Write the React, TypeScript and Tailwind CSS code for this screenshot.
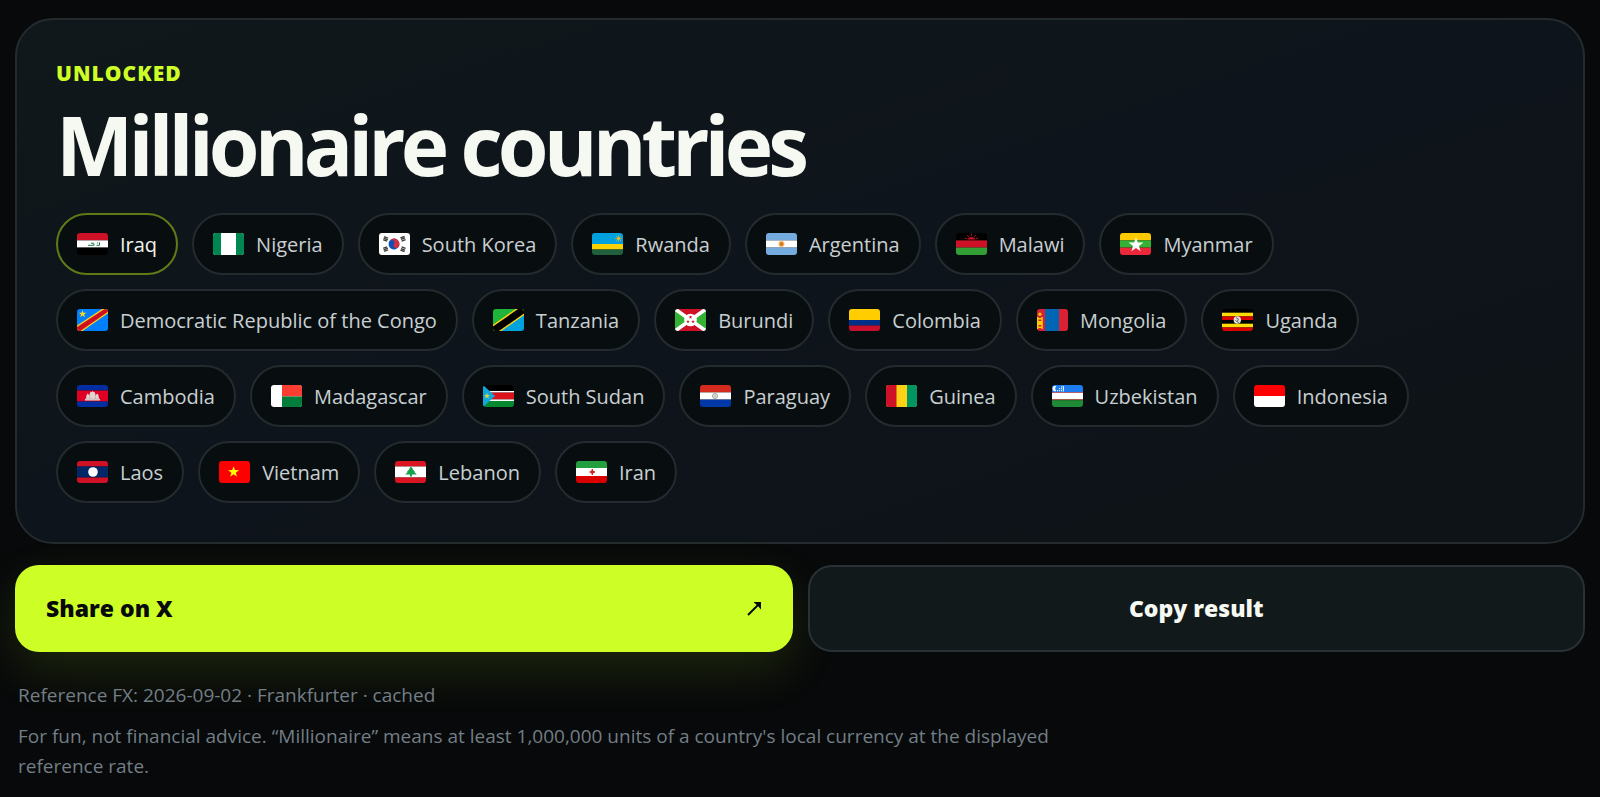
import React, { memo } from 'react';

// Five pointed star, first tip pointing up
const starPoints = (cx: number, cy: number, r: number) =>
  Array.from({ length: 10 }, (_, i) => {
    const radius = i % 2 === 0 ? r : r * 0.4;
    const angle = (Math.PI / 5) * i - Math.PI / 2;
    return `${(cx + radius * Math.cos(angle)).toFixed(2)},${(cy + radius * Math.sin(angle)).toFixed(2)}`;
  }).join(' ');

const Star: React.FC<{ cx: number; cy: number; r: number; fill: string }> = ({ cx, cy, r, fill }) => (
  <polygon points={starPoints(cx, cy, r)} fill={fill} />
);

// Horizontal bands: [colour, height][]
const Bands: React.FC<{ rows: [string, number][] }> = ({ rows }) => {
  let y = 0;
  return (
    <>
      {rows.map(([fill, height], i) => {
        const top = y;
        y += height;
        return <rect key={i} x="0" y={top} width="31" height={height} fill={fill} />;
      })}
    </>
  );
};

interface Country {
  name: string;
  flag: React.ReactNode;
  active?: boolean;
}

const COUNTRIES: Country[] = [
  {
    name: 'Iraq',
    active: true,
    flag: (
      <>
        <Bands rows={[['#ce1126', 7.4], ['#ffffff', 7.2], ['#000000', 7.4]]} />
        <path d="M11 12.3h6v-1.6M14 10.2h3M19.5 12.3h3v-3M20 10h1" stroke="#1c7a45" strokeWidth="1" fill="none" />
      </>
    ),
  },
  {
    name: 'Nigeria',
    flag: (
      <>
        <rect width="31" height="22" fill="#fff" />
        <rect width="8" height="22" fill="#008751" />
        <rect x="23" width="8" height="22" fill="#008751" />
      </>
    ),
  },
  {
    name: 'South Korea',
    flag: (
      <>
        <rect width="31" height="22" fill="#fff" />
        <g transform="rotate(30 15 11)">
          <circle cx="15" cy="11" r="5.4" fill="#0f4fb8" />
          <path d="M9.6 11a5.4 5.4 0 0 1 10.8 0a2.7 2.7 0 0 1-5.4 0a2.7 2.7 0 0 0-5.4 0z" fill="#d22f3f" />
        </g>
        <g stroke="#3a3a3a" strokeWidth="1.3">
          <path d="M4.2 6.6l2.6-3.6M5.6 7.5l2.6-3.6M7 8.4l2.4-3.5" transform="rotate(76 6.6 5.7)" />
          <path d="M21.4 4.9l2.4 3.5M22.8 3.9l2.6 3.6M24.2 3l2.4 3.6" transform="rotate(-76 24 5.7)" />
          <path d="M4.2 15.4l2.6 3.6M5.6 14.5l2.6 3.6M7 13.6l2.4 3.5" transform="rotate(-76 6.6 16.3)" />
          <path d="M21.4 17.1l2.4-3.5M22.8 18.1l2.6-3.6M24.2 19l2.4-3.6" transform="rotate(76 24 16.3)" />
        </g>
      </>
    ),
  },
  {
    name: 'Rwanda',
    flag: (
      <>
        <Bands rows={[['#00a1de', 11], ['#fad201', 5.5], ['#20603d', 5.5]]} />
        <path d="M26.5 2v7M23 5.5h7M24 3l5 5M29 3l-5 5" stroke="#c9b43c" strokeWidth="0.7" />
        <circle cx="26.5" cy="5.5" r="1.6" fill="#d8bd30" />
      </>
    ),
  },
  {
    name: 'Argentina',
    flag: (
      <>
        <Bands rows={[['#74acdf', 7.4], ['#ffffff', 7.2], ['#74acdf', 7.4]]} />
        <circle cx="15.5" cy="11" r="3" fill="#f2bf73" />
        <circle cx="15.5" cy="11" r="2" fill="#d8791f" />
      </>
    ),
  },
  {
    name: 'Malawi',
    flag: (
      <>
        <Bands rows={[['#000000', 7.4], ['#ce1126', 7.2], ['#339e35', 7.4]]} />
        <path d="M11.6 6.4a4 3 0 0 1 7.8 0z" fill="#ce1126" />
        <path d="M15.5 0.8v2M11.2 2.2l1.6 1.6M19.8 2.2l-1.6 1.6M8.8 5l2.4.8M22.2 5l-2.4.8" stroke="#ce1126" strokeWidth="0.9" />
      </>
    ),
  },
  {
    name: 'Myanmar',
    flag: (
      <>
        <Bands rows={[['#fecb00', 7.4], ['#34b233', 7.2], ['#ea2839', 7.4]]} />
        <Star cx={16} cy={12} r={7.8} fill="#fff" />
      </>
    ),
  },
  {
    name: 'Democratic Republic of the Congo',
    flag: (
      <>
        <rect width="31" height="22" fill="#007fff" />
        <path d="M0 16.6L25 0h6v4.2L5.5 22H0z" fill="#f7d618" />
        <path d="M0 18L27.6 0H31v2.8L3.4 22H0z" fill="#ce1021" />
        <Star cx={5.6} cy={5} r={4} fill="#f7d618" />
      </>
    ),
  },
  {
    name: 'Tanzania',
    flag: (
      <>
        <path d="M0 0h31L0 22z" fill="#1eb53a" />
        <path d="M31 0v22H0z" fill="#00a3dd" />
        <path d="M-3 24L34 -2" stroke="#fcd116" strokeWidth="10" />
        <path d="M-3 24L34 -2" stroke="#000" strokeWidth="7" />
      </>
    ),
  },
  {
    name: 'Burundi',
    flag: (
      <>
        <rect width="31" height="22" fill="#ce1126" />
        <path d="M0 0l15.5 11L0 22zM31 0L15.5 11 31 22z" fill="#34b233" />
        <path d="M0 0l31 22M31 0L0 22" stroke="#fff" strokeWidth="3.6" />
        <circle cx="15.5" cy="11" r="6.3" fill="#fff" />
        <Star cx={15.5} cy={8.2} r={1.9} fill="#ce1126" />
        <Star cx={13} cy={12.6} r={1.9} fill="#ce1126" />
        <Star cx={18} cy={12.6} r={1.9} fill="#ce1126" />
      </>
    ),
  },
  {
    name: 'Colombia',
    flag: <Bands rows={[['#ffcd00', 11], ['#003087', 5.5], ['#c8102e', 5.5]]} />,
  },
  {
    name: 'Mongolia',
    flag: (
      <>
        <rect width="31" height="22" fill="#da2032" />
        <rect x="8" width="14" height="22" fill="#0066b3" />
        <path d="M0 8h1.4v12H0zM4.4 8h1.4v12H4.4zM1.4 9h3v1.6h-3zM1.4 12h3v4h-3zM1.4 17.6h3V19h-3z" fill="#f9cf02" />
        <circle cx="2.9" cy="5.2" r="1.6" fill="#f9cf02" />
      </>
    ),
  },
  {
    name: 'Uganda',
    flag: (
      <>
        <Bands rows={[['#000000', 3.7], ['#fcdc04', 3.7], ['#d90000', 3.6], ['#000000', 3.7], ['#fcdc04', 3.7], ['#d90000', 3.6]]} />
        <circle cx="15.3" cy="11" r="3.7" fill="#e0e0e0" />
        <path d="M14 8.6l2.4 1.4-1 2.6 1.6 1M13.4 11.4l2 1.6" stroke="#555" strokeWidth="0.9" fill="none" />
      </>
    ),
  },
  {
    name: 'Cambodia',
    flag: (
      <>
        <Bands rows={[['#032ea1', 5.5], ['#e00025', 11], ['#032ea1', 5.5]]} />
        <path d="M8 15.5v-1.8h1l.6-3.6 1.2-1.7 1.2 1.7.2.8.8-3.2 1-1.3.7.9.8-1.6.8 1.6.7-.9 1 1.3.8 3.2.2-.8 1.2-1.7 1.2 1.7.6 3.6h1v1.8z" fill="#e6d5d5" />
        <path d="M12.6 10v4M18.4 10v4M9 14h13" stroke="#a8969a" strokeWidth="0.5" />
      </>
    ),
  },
  {
    name: 'Madagascar',
    flag: (
      <>
        <rect width="31" height="22" fill="#fff" />
        <rect x="11" width="20" height="11.5" fill="#fc3d32" />
        <rect x="11" y="11.5" width="20" height="10.5" fill="#007e3a" />
      </>
    ),
  },
  {
    name: 'South Sudan',
    flag: (
      <>
        <Bands rows={[['#000000', 6], ['#ffffff', 1.6], ['#da121a', 6.8], ['#ffffff', 1.6], ['#078930', 6]]} />
        <path d="M0 4v14l12-7z" fill="#0fa7dc" />
        <path d="M0 0v22l12-11z" fill="#0fa7dc" />
        <Star cx={4} cy={11} r={3.2} fill="#d8d83c" />
      </>
    ),
  },
  {
    name: 'Paraguay',
    flag: (
      <>
        <Bands rows={[['#d52b1e', 7.4], ['#ffffff', 7.2], ['#0038a8', 7.4]]} />
        <circle cx="15" cy="11" r="2.5" fill="#e8ece6" stroke="#8f9a90" strokeWidth="0.9" />
        <circle cx="15" cy="11" r="0.8" fill="#9da46a" />
      </>
    ),
  },
  {
    name: 'Guinea',
    flag: (
      <>
        <rect width="31" height="22" fill="#fcd116" />
        <rect width="10.5" height="22" fill="#ce1126" />
        <rect x="21" width="10" height="22" fill="#009460" />
      </>
    ),
  },
  {
    name: 'Uzbekistan',
    flag: (
      <>
        <Bands rows={[['#1c7cf0', 7], ['#d0445a', 0.8], ['#ffffff', 6.6], ['#c0502e', 0.8], ['#1e8a35', 6.8]]} />
        <path d="M4.4 1.2a2.7 2.7 0 1 0 0 4.8a3 3 0 0 1 0-4.8z" fill="#fff" />
        <path d="M9.6 1.2v1.2M7.6 3v1.2M9.6 3v1.2M5.6 5v1.2M7.6 5v1.2M9.6 5v1.2M11.4 1v5.4" stroke="#e6f0ff" strokeWidth="1.1" />
      </>
    ),
  },
  {
    name: 'Indonesia',
    flag: <Bands rows={[['#ff0000', 11], ['#ffffff', 11]]} />,
  },
  {
    name: 'Laos',
    flag: (
      <>
        <Bands rows={[['#ce1126', 5.5], ['#002868', 11], ['#ce1126', 5.5]]} />
        <circle cx="16" cy="11" r="4.8" fill="#fff" />
      </>
    ),
  },
  {
    name: 'Vietnam',
    flag: (
      <>
        <rect width="31" height="22" fill="#f00" />
        <Star cx={14.6} cy={11} r={5.8} fill="#ffff00" />
      </>
    ),
  },
  {
    name: 'Lebanon',
    flag: (
      <>
        <Bands rows={[['#da1420', 5.5], ['#ffffff', 11], ['#da1420', 5.5]]} />
        <path d="M16 5.6l2.2 2.6h-.6l2.6 2.8h-.8l2.4 2.6h-4.8v2h-2v-2h-4.8l2.4-2.6h-.8l2.6-2.8h-.6z" fill="#18a04c" />
      </>
    ),
  },
  {
    name: 'Iran',
    flag: (
      <>
        <Bands rows={[['#239f40', 7], ['#ffffff', 8], ['#da0000', 7]]} />
        <path d="M16.3 8v6M13.6 11h5.4" stroke="#da2020" strokeWidth="1.3" />
        <circle cx="16.3" cy="11" r="1.8" fill="#da2020" />
      </>
    ),
  },
];

const CountryChip: React.FC<{ country: Country }> = memo(({ country }) => {
  return (
    <li
      className={`flex h-[62px] items-center gap-3 rounded-full border-2 bg-[#080e10] px-[19px] text-[20px] ${
        country.active ? 'border-[#5f7a16] text-[#f1f4ee]' : 'border-[#242b2e] text-[#c8cfd2]'
      }`}
    >
      <svg className="h-[22px] w-[31px] shrink-0 rounded-[3px]" viewBox="0 0 31 22" aria-hidden="true">
        {country.flag}
      </svg>
      <span className="pt-0.5">{country.name}</span>
    </li>
  );
});

const App: React.FC = () => {
  return (
    <main className="min-h-screen bg-[#07090a] px-[15px] pt-[18px] pb-5 font-['Open_Sans','Noto_Sans',sans-serif]">
      {/* Unlocked countries */}
      <section className="rounded-[38px] border-2 border-[#242b2e] bg-linear-to-br from-[#10181b] via-[#0e141b] to-[#0d1316] p-[39px]">
        <p className="text-[21px] leading-7 font-extrabold tracking-wider text-[#cdff27] uppercase">Unlocked</p>
        <h1 className="mt-[14px] text-[82px] leading-[86px] font-bold tracking-[-0.06em] text-[#f6f8f2]">
          Millionaire countries
        </h1>
        <ul className="mt-[26px] flex flex-wrap gap-[14px]">
          {COUNTRIES.map((country) => (
            <CountryChip key={country.name} country={country} />
          ))}
        </ul>
      </section>

      {/* Actions */}
      <div className="mt-[21px] grid grid-cols-2 gap-[15px] text-[23px] font-extrabold">
        <a
          href="#share"
          className="flex h-[87px] items-center justify-between rounded-3xl bg-[#cdff27] px-[31px] text-[#07090a] shadow-[0_18px_50px_rgba(205,255,39,0.12)]"
        >
          <span>Share on X</span>
          <svg className="size-[15px]" viewBox="0 0 15 15" aria-hidden="true">
            <path d="M1 14L11.5 3.5" stroke="currentColor" strokeWidth="2" fill="none" />
            <path d="M6.5 1H14v7.5l-2.4-2.8-2.3-2.3z" fill="currentColor" />
          </svg>
        </a>
        <button
          type="button"
          className="h-[87px] cursor-pointer rounded-3xl border-2 border-[#283236] bg-[#11191b] text-[#f6f8f2]"
        >
          Copy result
        </button>
      </div>

      <footer className="mt-7 flex max-w-[1060px] flex-col gap-[11px] px-[3px] text-[19px] leading-[30px] text-[#737e85]">
        <p>Reference FX: 2026-09-02 · Frankfurter · cached</p>
        <p>
          For fun, not financial advice. “Millionaire” means at least 1,000,000 units of a country's local currency at
          the displayed reference rate.
        </p>
      </footer>
    </main>
  );
};

export default App;
